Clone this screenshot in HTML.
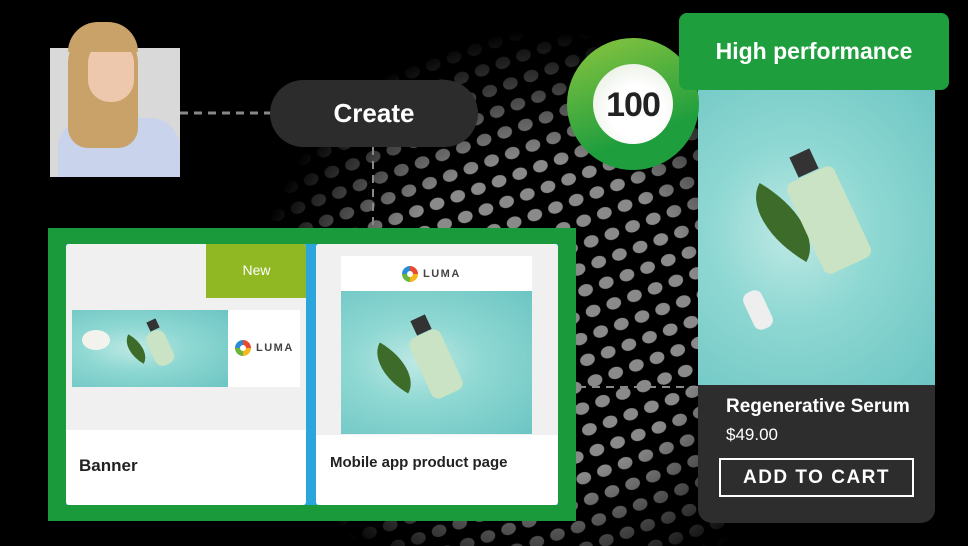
<!DOCTYPE html>
<html><head><meta charset="utf-8"><style>
*{margin:0;padding:0;box-sizing:border-box}
body{width:968px;height:546px;background:#000;position:relative;overflow:hidden;font-family:"Liberation Sans",sans-serif}
.a{position:absolute}
.luma{font-size:11px;letter-spacing:1.5px;color:#444;font-weight:bold;display:flex;align-items:center;gap:5px}
.ring{width:16px;height:16px;border-radius:50%;background:conic-gradient(#e84a2f 0 25%,#f5b81c 0 50%,#6ab53a 0 75%,#2a8cd4 0);position:relative}
.ring:after{content:"";position:absolute;left:5px;top:5px;width:6px;height:6px;border-radius:50%;background:#fff}
.img{background:radial-gradient(ellipse at 40% 50%,#bfe9e5 0,#8fd8d3 40%,#6cc5c3 100%);overflow:hidden}
.bot{position:absolute;background:#c9e3c4;border-radius:8px;transform:rotate(-25deg)}
.cap{position:absolute;background:#333;transform:rotate(-25deg)}
.leaf{position:absolute;background:#3d6b2a;border-radius:0 100% 0 100%;transform:rotate(30deg)}
</style></head><body>
<svg class="a" style="left:0;top:0" width="968" height="546">
<defs>
<pattern id="p" width="22" height="22" patternUnits="userSpaceOnUse" patternTransform="rotate(-20)"><ellipse cx="11" cy="11" rx="7.5" ry="6" fill="#8a8a8a"/></pattern>
<radialGradient id="g" cx="540" cy="320" r="290" gradientUnits="userSpaceOnUse"><stop offset="0.55" stop-color="#fff"/><stop offset="1" stop-color="#000"/></radialGradient>
<mask id="m"><rect width="968" height="546" fill="url(#g)"/></mask>
</defs>
<rect width="968" height="546" fill="url(#p)" mask="url(#m)"/>
<line x1="180" y1="113" x2="270" y2="113" stroke="#888" stroke-width="3" stroke-dasharray="8,6"/>
<line x1="373" y1="147" x2="373" y2="230" stroke="#888" stroke-width="2" stroke-dasharray="8,6"/>
<line x1="578" y1="387" x2="698" y2="387" stroke="#888" stroke-width="2" stroke-dasharray="8,6"/>
</svg>
<div class="a" style="left:50px;top:48px;width:130px;height:129px;background:#d9d9d9;overflow:hidden">
 <div class="a" style="left:8px;top:70px;width:122px;height:70px;background:#c9d3ec;border-radius:30px 30px 0 0"></div>
 <div class="a" style="left:18px;top:-20px;width:70px;height:120px;background:#c9a26a;border-radius:35px 35px 20px 20px"></div>
 <div class="a" style="left:38px;top:-8px;width:46px;height:62px;background:#edc8ac;border-radius:23px 23px 22px 22px"></div>
</div>
<div class="a" style="left:68px;top:22px;width:70px;height:30px;background:#c9a26a;border-radius:35px 35px 0 0"></div>
<div class="a" style="left:270px;top:80px;width:208px;height:67px;background:#2c2c2c;border-radius:34px;color:#fff;font-size:26px;font-weight:bold;text-align:center;line-height:67px">Create</div>
<div class="a" style="left:48px;top:228px;width:528px;height:293px;background:#1b9a3c"></div>
<div class="a" style="left:66px;top:244px;width:492px;height:261px;background:#2aa6dc"></div>
<div class="a" style="left:66px;top:244px;width:240px;height:261px;background:#fff;border-radius:3px;overflow:hidden">
 <div class="a" style="left:0;top:0;width:240px;height:186px;background:#f0f0f0"></div>
 <div class="a" style="left:140px;top:0;width:101px;height:54px;background:#8fb823;color:#fff;font-size:14px;text-align:center;line-height:52px">New</div>
 <div class="a img" style="left:6px;top:66px;width:156px;height:77px">
  <div class="leaf" style="left:50px;top:30px;width:28px;height:18px"></div>
  <div class="bot" style="left:78px;top:20px;width:20px;height:36px"></div>
  <div class="cap" style="left:76px;top:10px;width:10px;height:10px"></div>
  <div class="a" style="left:10px;top:20px;width:28px;height:20px;background:#f3f3ee;border-radius:50%"></div>
 </div>
 <div class="a" style="left:162px;top:66px;width:72px;height:77px;background:#fff"><div class="luma" style="position:absolute;left:7px;top:30px"><span class="ring"></span>LUMA</div></div>
 <div class="a" style="left:13px;top:212px;font-size:17px;font-weight:bold;color:#222">Banner</div>
</div>
<div class="a" style="left:316px;top:244px;width:242px;height:261px;background:#fff;border-radius:3px;overflow:hidden">
 <div class="a" style="left:0;top:0;width:242px;height:191px;background:#f0f0f0"></div>
 <div class="a" style="left:25px;top:12px;width:191px;height:35px;background:#fff"><div class="luma" style="position:absolute;left:61px;top:10px"><span class="ring"></span>LUMA</div></div>
 <div class="a img" style="left:25px;top:47px;width:191px;height:143px">
  <div class="leaf" style="left:28px;top:62px;width:50px;height:30px"></div>
  <div class="bot" style="left:78px;top:40px;width:34px;height:66px"></div>
  <div class="cap" style="left:72px;top:26px;width:16px;height:16px"></div>
 </div>
 <div class="a" style="left:14px;top:210px;font-size:15px;font-weight:bold;color:#222">Mobile app product page</div>
</div>
<div class="a" style="left:698px;top:80px;width:237px;height:443px;background:#2d2d2d;border-radius:0 0 14px 14px;overflow:hidden">
 <div class="a img" style="left:0;top:0;width:237px;height:305px">
  <div class="leaf" style="left:45px;top:120px;width:80px;height:45px"></div>
  <div class="bot" style="left:105px;top:90px;width:52px;height:100px"></div>
  <div class="cap" style="left:95px;top:72px;width:22px;height:22px"></div>
  <div class="bot" style="left:50px;top:210px;width:20px;height:40px;background:#eee"></div>
 </div>
 <div class="a" style="left:28px;top:316px;color:#fff;font-size:19px;font-weight:bold">Regenerative Serum</div>
 <div class="a" style="left:28px;top:345px;color:#fff;font-size:17px">$49.00</div>
 <div class="a" style="left:21px;top:378px;width:195px;height:39px;border:2px solid #fff;color:#fff;font-size:19px;font-weight:bold;letter-spacing:1.5px;text-align:center;line-height:35px">ADD TO CART</div>
</div>
<div class="a" style="left:567px;top:38px;width:132px;height:132px;border-radius:50%;background:linear-gradient(160deg,#8cc63f,#1f9e3e 70%)"></div>
<div class="a" style="left:593px;top:64px;width:80px;height:80px;border-radius:50%;background:radial-gradient(circle at 55% 60%,#fff 40%,#dfe9d9);color:#222;font-size:34px;font-weight:bold;text-align:center;line-height:82px;letter-spacing:-1px">100</div>
<div class="a" style="left:679px;top:13px;width:270px;height:77px;background:#1f9e3e;border-radius:8px;color:#fff;font-size:23px;font-weight:bold;text-align:center;line-height:77px">High performance</div>
</body></html>
